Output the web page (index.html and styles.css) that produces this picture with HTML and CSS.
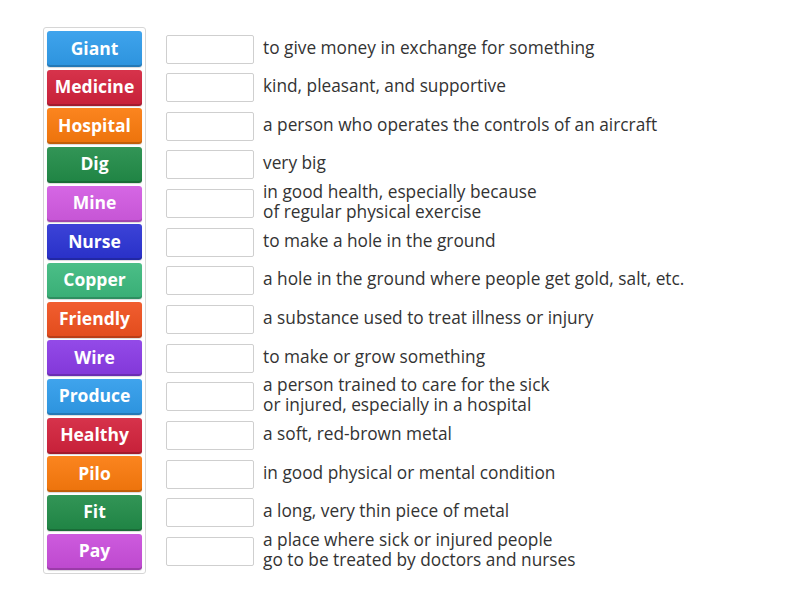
FILE: index.html
```
<!DOCTYPE html>
<html lang="en">
<head>
    <meta charset="UTF-8">
    <meta name="viewport" content="width=device-width, initial-scale=1.0">
    <title>Match up</title>
    <link rel="stylesheet" href="styles.css">
</head>
<body>
<div class="board">
  <div class="tiles">
    <div class="tile blue">Giant</div>
    <div class="tile red">Medicine</div>
    <div class="tile orange">Hospital</div>
    <div class="tile green">Dig</div>
    <div class="tile pink">Mine</div>
    <div class="tile navy">Nurse</div>
    <div class="tile mint">Copper</div>
    <div class="tile flame">Friendly</div>
    <div class="tile violet">Wire</div>
    <div class="tile blue">Produce</div>
    <div class="tile red">Healthy</div>
    <div class="tile orange">Pilo</div>
    <div class="tile green">Fit</div>
    <div class="tile magenta">Pay</div>
  </div>

  <!-- definitions with empty drop boxes -->
  <div class="targets">
    <div class="row"><div class="slot"></div><div class="def">to give money in exchange for something</div></div>
    <div class="row"><div class="slot"></div><div class="def">kind, pleasant, and supportive</div></div>
    <div class="row"><div class="slot"></div><div class="def">a person who operates the controls of an aircraft</div></div>
    <div class="row"><div class="slot"></div><div class="def">very big</div></div>
    <div class="row"><div class="slot"></div><div class="def">in good health, especially because<br>of regular physical exercise</div></div>
    <div class="row"><div class="slot"></div><div class="def">to make a hole in the ground</div></div>
    <div class="row"><div class="slot"></div><div class="def">a hole in the ground where people get gold, salt, etc.</div></div>
    <div class="row"><div class="slot"></div><div class="def">a substance used to treat illness or injury</div></div>
    <div class="row"><div class="slot"></div><div class="def">to make or grow something</div></div>
    <div class="row"><div class="slot"></div><div class="def">a person trained to care for the sick<br>or injured, especially in a hospital</div></div>
    <div class="row"><div class="slot"></div><div class="def">a soft, red-brown metal</div></div>
    <div class="row"><div class="slot"></div><div class="def">in good physical or mental condition</div></div>
    <div class="row"><div class="slot"></div><div class="def">a long, very thin piece of metal</div></div>
    <div class="row"><div class="slot"></div><div class="def">a place where sick or injured people<br>go to be treated by doctors and nurses</div></div>
  </div>
</div>
</body>
</html>
```

FILE: styles.css
```
* {
  box-sizing: border-box;
}

body {
  margin: 0;
  padding: 0;
  background: #ffffff;
  font-family: 'Open Sans', 'Noto Sans', sans-serif;
}

.board {
  display: flex;
  align-items: flex-start;
  padding: 27px 0 0 43px;
}

.tiles {
  display: flex;
  flex-direction: column;
  gap: 2.66px;
  width: 103px;
  padding: 3px;
  border: 1px solid #d6d6d6;
  border-radius: 3px;
}

.tile {
  height: 36px;
  padding-bottom: 3px;
  border-radius: 3px;
  color: #ffffff;
  font-size: 17.5px;
  font-weight: 700;
  display: flex;
  justify-content: center;
  align-items: center;
  box-shadow: inset 0 -2px 0 rgba(0, 0, 0, 0.18), 0 1px 1px rgba(0, 0, 0, 0.15);
  background-image: linear-gradient(rgba(255, 255, 255, 0.08), rgba(0, 0, 0, 0.06));
}

.blue { background-color: #2f9ceb; }
.red { background-color: #d3223c; }
.orange { background-color: #fb7a0c; }
.green { background-color: #218c48; }
.pink { background-color: #d25ae2; }
.navy { background-color: #2b33d4; }
.mint { background-color: #3cb97d; }
.flame { background-color: #f0501e; }
.violet { background-color: #8a3be6; }
.magenta { background-color: #c94ddb; }

.targets {
  display: flex;
  flex-direction: column;
  gap: 2.66px;
  padding-top: 4px;
  margin-left: 20px;
}

.row {
  height: 36px;
  display: flex;
  align-items: center;
}

.slot {
  width: 88px;
  height: 29px;
  border: 1px solid #cfcfcf;
  border-radius: 2px;
  background: #ffffff;
  flex-shrink: 0;
}

.def {
  margin-left: 9px;
  padding-bottom: 3px;
  font-size: 17.3px;
  line-height: 20px;
  color: #333333;
  white-space: nowrap;
}
```
